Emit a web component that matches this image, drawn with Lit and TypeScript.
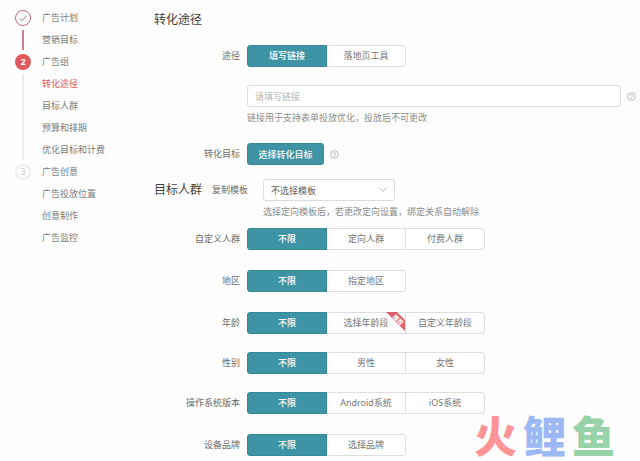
import { LitElement, html, css, svg, nothing } from "lit";
import { customElement, property } from "lit/decorators.js";
import { classMap } from "lit/directives/class-map.js";

interface Step {
  state: "done" | "current" | "todo";
  items: string[];
}

interface Targeting {
  name: string;
  label: string;
  options: string[];
  badge?: number;
  roomy?: boolean;
}

const STEPS: Step[] = [
  { state: "done", items: ["广告计划", "营销目标"] },
  { state: "current", items: ["广告组", "转化途径", "目标人群", "预算和排期", "优化目标和计费"] },
  { state: "todo", items: ["广告创意", "广告投放位置", "创意制作", "广告监控"] },
];

const ACTIVE = "转化途径";

const TARGETING: Targeting[] = [
  { name: "crowd", label: "自定义人群", options: ["不限", "定向人群", "付费人群"] },
  { name: "region", label: "地区", options: ["不限", "指定地区"], roomy: true },
  { name: "age", label: "年龄", options: ["不限", "选择年龄段", "自定义年龄段"], badge: 1, roomy: true },
  { name: "gender", label: "性别", options: ["不限", "男性", "女性"] },
  { name: "os", label: "操作系统版本", options: ["不限", "Android系统", "iOS系统"] },
  { name: "brand", label: "设备品牌", options: ["不限", "选择品牌"], roomy: true },
];

const helpIcon = html`<svg class="help" viewBox="0 0 18 18" aria-hidden="true">
  ${svg`<circle cx="9" cy="9" r="7.6" fill="none" stroke="#a6a6a6" stroke-width="1.5"/>
  <path d="M6.6 7.4a2.4 2.4 0 1 1 3.6 2.1c-.8.5-1.2.8-1.2 1.7" fill="none" stroke="#a6a6a6" stroke-width="1.5"/>
  <circle cx="9" cy="13.2" r="1" fill="#a6a6a6"/>`}
</svg>`;

@customElement("step-nav")
export class StepNav extends LitElement {
  static styles = css`
    :host { display: block; }
    .step { display: flex; gap: 11px; }
    .rail { display: flex; flex-direction: column; align-items: center; width: 16px; padding-top: 3px; }
    .dot {
      box-sizing: border-box; width: 16px; height: 16px; border-radius: 50%;
      display: flex; align-items: center; justify-content: center;
      font-size: 9px; line-height: 14px; flex: none;
    }
    .done .dot { border: 1px solid #bd6a72; }
    .current .dot { background: #e0595c; color: #fff; font-weight: 700; }
    .todo .dot { border: 2px solid #eeeeee; color: #c8c8c8; }
    .check { width: 10px; height: 10px; }
    .line { flex: 1; width: 2px; margin: 4px 0 1px; background: #ececec; }
    .done .line { background: #cf7c82; }
    .list { list-style: none; margin: 0; padding: 0; }
    .link { display: block; line-height: 22px; font-size: 9px; color: #7a7a7a; text-decoration: none; white-space: nowrap; }
    .link.active { color: #dc5a60; }
  `;

  render() {
    return html`<nav aria-label="步骤">
      ${STEPS.map(
        (step, i) => html`<div class="step ${step.state}">
          <div class="rail">
            <span class="dot">${step.state === "done"
              ? html`<svg class="check" viewBox="0 0 10 10"><path d="M1.6 5.2 4.1 7.6 8.6 2.8" fill="none" stroke="#a8767c" stroke-width="1"/></svg>`
              : i + 1}</span>
            ${i < STEPS.length - 1 ? html`<span class="line"></span>` : nothing}
          </div>
          <ul class="list">
            ${step.items.map((t) => html`<li><a href="#" class=${classMap({ link: true, active: t === ACTIVE })}>${t}</a></li>`)}
          </ul>
        </div>`
      )}
    </nav>`;
  }
}

@customElement("option-group")
export class OptionGroup extends LitElement {
  @property() name = "";
  @property() label = "";
  @property({ type: Array }) options: string[] = [];
  @property({ type: Number }) badge = -1;

  static styles = css`
    :host { display: block; }
    .row { display: grid; grid-template-columns: 86px 1fr; column-gap: 7px; align-items: center; }
    .label { text-align: right; font-size: 9px; line-height: 22px; color: #6c6c6c; white-space: nowrap; }
    .group { display: flex; }
    .option {
      position: relative; box-sizing: border-box; width: 80px; height: 22px; margin-left: -1px;
      border: 1px solid #dedede; background: #fff; color: #757575;
      font-size: 9px; line-height: 20px; text-align: center; white-space: nowrap;
    }
    .option:first-child { margin-left: 0; border-radius: 3px 0 0 3px; }
    .option:last-child { border-radius: 0 3px 3px 0; }
    .option:has(:checked) { background: #3e93a4; border-color: #35899b; color: #fff; font-weight: 500; z-index: 1; }
    .radio { position: absolute; inset: 0; margin: 0; opacity: 0; cursor: pointer; }
    .ribbon { position: absolute; top: -1px; right: -1px; width: 20px; height: 20px; }
    .ribbon-text { font-size: 6px; font-weight: 700; fill: #fff; }
  `;

  render() {
    return html`<div class="row" role="radiogroup" aria-labelledby="label">
      <span class="label" id="label">${this.label}</span>
      <div class="group">
        ${this.options.map(
          (text, i) => html`<label class="option">
            <input class="radio" type="radio" name=${this.name} .checked=${i === 0} />${text}
            ${i === this.badge
              ? html`<svg class="ribbon" viewBox="0 0 20 20">
                  <path d="M0 0H11L20 9V20Z" fill="#d9626a" />
                  <text class="ribbon-text" text-anchor="middle" transform="translate(12 8) rotate(45)" y="2">推荐</text>
                </svg>`
              : nothing}
          </label>`
        )}
      </div>
    </div>`;
  }
}

@customElement("app-root")
export class AppRoot extends LitElement {
  static styles = css`
    :host {
      display: block; position: relative; background: #fefefe;
      font-family: "Noto Sans", "Noto Sans CJK SC", sans-serif; font-size: 9px; color: #6c6c6c;
    }
    .page { display: flex; min-height: 100vh; }
    .side { flex: none; box-sizing: border-box; width: 154px; padding: 7px 0 0 15px; }
    .main { flex: 1; min-width: 0; padding: 10px 4px 4px 0; }
    .title { margin: 0; font-size: 12px; line-height: 20px; font-weight: 400; color: #404040; white-space: nowrap; }
    .first { margin-top: 15px; }
    .row { display: grid; grid-template-columns: 86px 1fr; column-gap: 7px; margin-top: 18px; }
    .label { text-align: right; line-height: 22px; white-space: nowrap; }
    .field { display: flex; align-items: center; gap: 6px; }
    .help { width: 9px; height: 9px; flex: none; }
    .input, .select {
      box-sizing: border-box; height: 22px; border: 1px solid #dcdcdc; border-radius: 3px;
      background: #fff; font: inherit; outline: none; padding: 0 7px;
    }
    .input { flex: 1; min-width: 0; color: #666; }
    .input::placeholder { color: #b4b4b4; opacity: 1; }
    .hint { margin: 4px 0 0; line-height: 14px; color: #8a8a8a; }
    .primary {
      box-sizing: border-box; width: 77px; height: 22px; padding: 0; border: 1px solid #35899b; border-radius: 3px;
      background: #3e93a4; color: #fff; font: inherit; font-weight: 500;
    }
    .template { display: flex; margin: 14px 0 9px; }
    .template .title { line-height: 22px; }
    .template .label { margin: 0 15px 0 10px; }
    .picker { position: relative; width: 132px; }
    .select { display: block; width: 100%; appearance: none; color: #606060; }
    .arrow { position: absolute; right: 8px; top: 8px; width: 8px; height: 6px; pointer-events: none; }
    .option-row { margin-top: 18px; }
    .option-row.roomy { margin-top: 20px; }
    .option-row.lead { margin-top: 0; }
    .mark {
      position: absolute; right: 25px; bottom: 5px; display: flex; gap: 6px;
      font-family: "Noto Sans CJK SC", sans-serif;
      font-size: 43px; line-height: 43px; font-weight: 900; pointer-events: none;
    }
    .fire { color: #ff9496; }
    .carp { color: #9cb8f5; }
    .fish { color: #98d2a8; }
  `;

  render() {
    return html`<div class="page">
        <aside class="side"><step-nav></step-nav></aside>
        <main class="main">
          <h2 class="title">转化途径</h2>
          <option-group class="first" name="path" label="途径" .options=${["填写链接", "落地页工具"]}></option-group>
          <div class="row">
            <span></span>
            <div>
              <div class="field">
                <input class="input" type="text" placeholder="请填写链接" aria-label="请填写链接" />${helpIcon}
              </div>
              <p class="hint">链接用于支持表单投放优化，投放后不可更改</p>
            </div>
          </div>
          <div class="row">
            <label class="label" for="goal">转化目标</label>
            <div class="field"><button class="primary" id="goal" type="button">选择转化目标</button>${helpIcon}</div>
          </div>
          <div class="template">
            <h2 class="title">目标人群</h2>
            <label class="label" for="template">复制模板</label>
            <div>
              <div class="picker">
                <select class="select" id="template"><option>不选择模板</option></select>
                <svg class="arrow" viewBox="0 0 8 6"><path d="M1 1 4 4.4 7 1" fill="none" stroke="#bcbcbc" /></svg>
              </div>
              <p class="hint">选择定向模板后，若更改定向设置，绑定关系自动解除</p>
            </div>
          </div>
          ${TARGETING.map(
            (t, i) => html`<option-group
              class=${classMap({ "option-row": true, roomy: !!t.roomy, lead: i === 0 })}
              name=${t.name} label=${t.label} .options=${t.options} .badge=${t.badge ?? -1}
            ></option-group>`
          )}
        </main>
      </div>
      <div class="mark"><span class="fire">火</span><span class="carp">鲤</span><span class="fish">鱼</span></div>`;
  }
}
